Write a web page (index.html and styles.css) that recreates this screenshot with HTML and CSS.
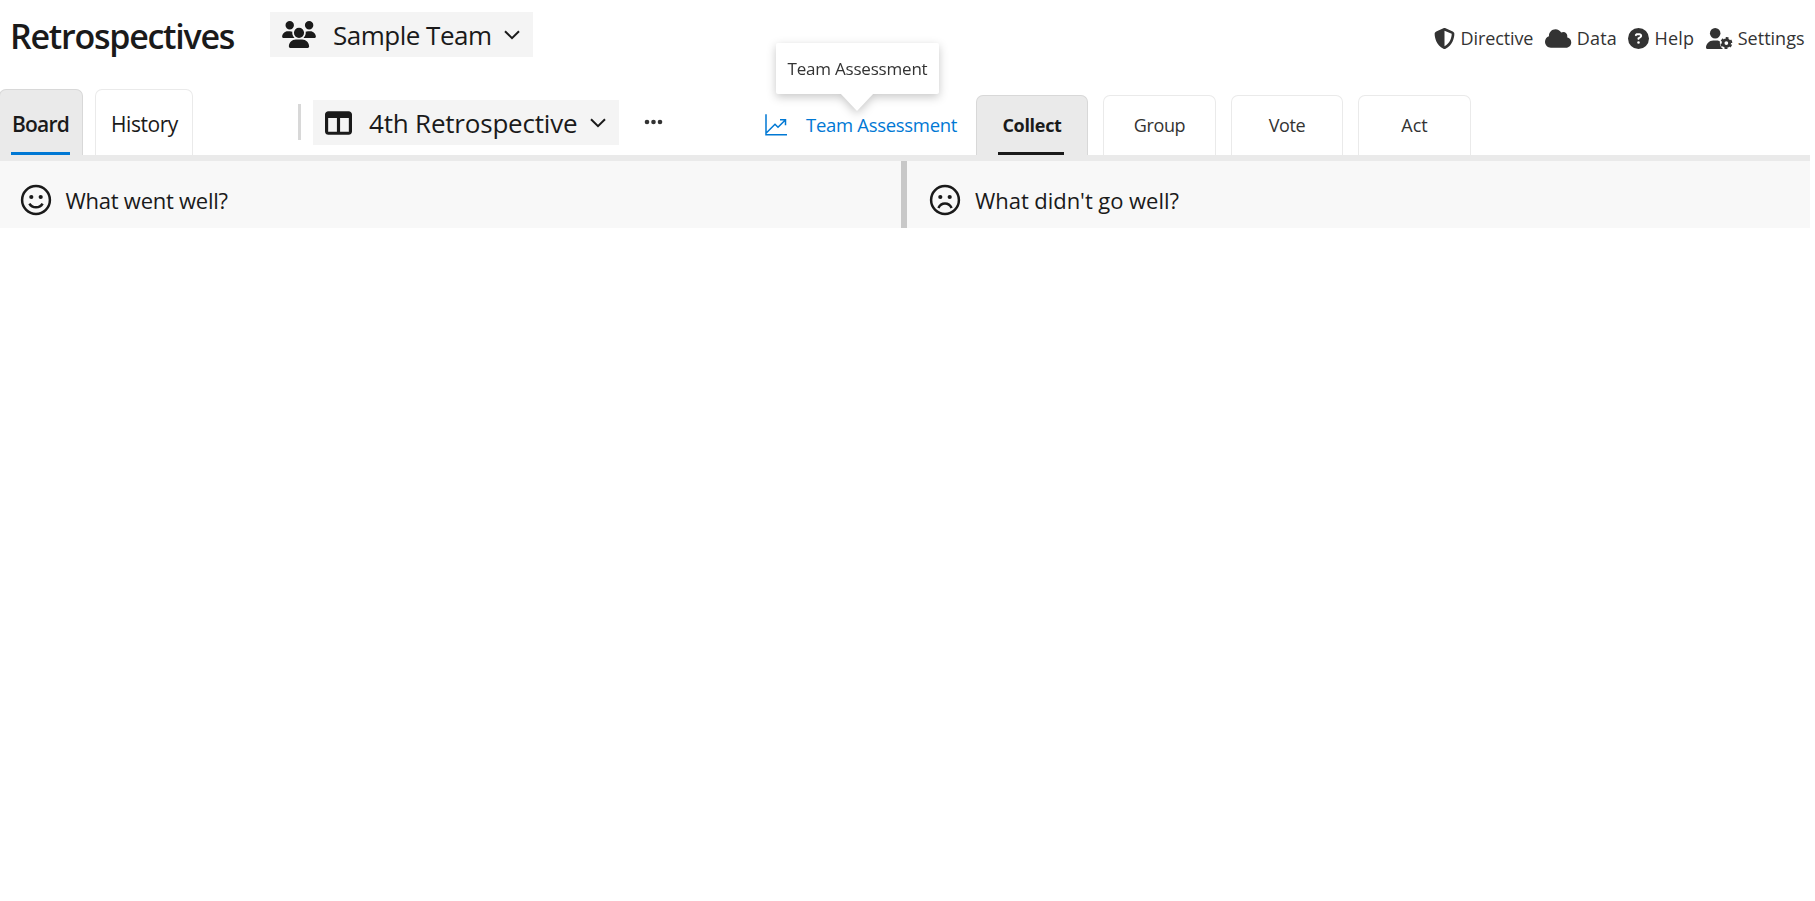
FILE: index.html
```html
<!DOCTYPE html>
<html lang="en">
<head>
<meta charset="utf-8">
<title>Retrospectives</title>
<link rel="stylesheet" href="styles.css">
</head>
<body>
<div class="app">
  <header class="header">
    <h1 class="title">Retrospectives</h1>
    <button class="picker team-picker">
      <svg class="team-icon" viewBox="0 0 640 512"><path d="M144 0a80 80 0 1 1 0 160A80 80 0 1 1 144 0zM512 0a80 80 0 1 1 0 160A80 80 0 1 1 512 0zM0 298.7C0 239.8 47.8 192 106.7 192h42.7c15.9 0 31 3.5 44.6 9.7c-1.3 7.2-1.9 14.7-1.9 22.3c0 38.2 16.8 72.5 43.3 96H21.3C9.6 320 0 310.4 0 298.7zM404.600 320c26.6-23.5 43.3-57.8 43.3-96c0-7.6-.7-15-1.9-22.3c13.6-6.3 28.7-9.7 44.6-9.7h42.7C592.2 192 640 239.8 640 298.700c0 11.800-9.600 21.300-21.300 21.300H404.600zM224 224a96 96 0 1 1 192 0 96 96 0 1 1 -192 0zM128 485.300C128 411.700 187.700 352 261.300 352H378.700C452.300 352 512 411.700 512 485.300c0 14.700-11.900 26.700-26.700 26.700H154.700c-14.700 0-26.700-11.900-26.700-26.700z"/></svg>
      <span class="team-name">Sample Team</span>
      <svg class="chevron" viewBox="0 0 16 10"><path d="M1 1.200l7 7 7-7"/></svg>
    </button>
    <div class="links">
      <a class="link"><svg class="ic" viewBox="0 0 512 512"><path d="M256 0c4.600 0 9.200 1 13.400 2.900L457.700 82.800c22 9.300 38.400 31 38.300 57.200c-.5 99.200-41.300 280.700-213.600 363.200c-16.700 8-36.100 8-52.800 0C57.300 420.700 16.500 239.200 16 140c-.1-26.200 16.300-47.900 38.300-57.200L242.700 2.900C246.800 1 251.400 0 256 0zm0 66.800V444.800C394 378 431.100 230.100 432 141.400L256 66.800z"/></svg><span class="t-directive">Directive</span></a>
      <a class="link"><svg class="ic wide" viewBox="0 0 640 512"><path d="M0 336c0 79.500 64.500 144 144 144H512c70.700 0 128-57.300 128-128c0-61.900-44-113.600-102.400-125.400c4.100-10.700 6.400-22.400 6.400-34.600c0-53-43-96-96-96c-19.700 0-38.100 6-53.300 16.200C367 64.200 315.300 32 256 32C167.600 32 96 103.600 96 192c0 2.700 .1 5.400 .2 8.100C40.200 219.800 0 273.200 0 336z"/></svg><span class="t-data">Data</span></a>
      <a class="link"><svg class="ic" viewBox="0 0 512 512"><path d="M256 512A256 256 0 1 0 256 0a256 256 0 1 0 0 512zM169.800 165.300c7.900-22.300 29.100-37.300 52.800-37.300h58.300c34.900 0 63.100 28.300 63.100 63.100c0 22.600-12.100 43.500-31.700 54.800L280 264.400c-.2 13-10.900 23.600-24 23.600c-13.300 0-24-10.700-24-24V250.500c0-8.600 4.600-16.500 12.100-20.800l44.300-25.400c4.700-2.700 7.600-7.700 7.600-13.100c0-8.400-6.800-15.100-15.100-15.100H222.600c-3.400 0-6.400 2.100-7.500 5.300l-.4 1.200c-4.400 12.500-18.200 19-30.600 14.600s-19-18.200-14.600-30.600l.3-1.200zM224 352a32 32 0 1 1 64 0 32 32 0 1 1 -64 0z"/></svg><span class="t-help">Help</span></a>
      <a class="link"><svg class="ic wide" viewBox="0 0 640 512"><circle cx="224" cy="128" r="128"/><path d="M178 304C80 304 0 384 0 482.300C0 498.700 13.300 512 29.700 512H418C360 480 330 420 338 330C315 310 290 304 270 304z"/><circle cx="496" cy="368" r="80" class="gear-ring"/><circle cx="496" cy="368" r="124" class="gear-teeth" transform="rotate(16 496 368)"/></svg><span class="t-settings">Settings</span></a>
    </div>
  </header>

  <nav class="bar">
    <div class="tab tab-board active"><span>Board</span></div>
    <div class="tab tab-history"><span>History</span></div>
    <div class="separator"></div>
    <button class="picker retro-picker">
      <svg class="board-icon" viewBox="0 0 512 448"><path d="M0 64C0 28.700 28.700 0 64 0H448c35.300 0 64 28.700 64 64V384c0 35.300-28.700 64-64 64H64c-35.300 0-64-28.700-64-64V64zm60 64V388H226V128H60zm392 0H286V388H452V128z"/></svg>
      <span class="retro-name">4th Retrospective</span>
      <svg class="chevron" viewBox="0 0 16 10"><path d="M1 1.200l7 7 7-7"/></svg>
    </button>
    <svg class="more" viewBox="0 0 19 6"><circle cx="3" cy="3" r="2.300"/><circle cx="9.500" cy="3" r="2.300"/><circle cx="16" cy="3" r="2.300"/></svg>
    <div class="assessment">
      <svg class="chart" viewBox="0 0 22 22"><path d="M1 .3V20.700H22M1.500 18.800L10 10.300l3 3L20.300 6M15 5.700h5.500v5.500"/></svg>
      <span>Team Assessment</span>
      <div class="tooltip">Team Assessment</div>
    </div>
    <div class="phases">
      <div class="tab phase phase-active"><span>Collect</span></div>
      <div class="tab phase"><span>Group</span></div>
      <div class="tab phase"><span>Vote</span></div>
      <div class="tab phase phase-act"><span>Act</span></div>
    </div>
  </nav>

  <main class="columns">
    <section class="column">
      <svg class="face" viewBox="0 0 32 32"><circle cx="16" cy="16" r="13.900"/><path d="M9.400 19.600c2.800 5 10.400 5 13.200 0"/><circle class="eye" cx="11.300" cy="13" r="2.100"/><circle class="eye" cx="20.700" cy="13" r="2.100"/></svg>
      <h2 class="heading went">What went well?</h2>
    </section>
    <section class="column second">
      <svg class="face" viewBox="0 0 32 32"><circle cx="16" cy="16" r="13.900"/><path d="M9.400 24c2.800-6 10.400-6 13.200 0"/><circle class="eye" cx="11.300" cy="13" r="2.100"/><circle class="eye" cx="20.700" cy="13" r="2.100"/></svg>
      <h2 class="heading">What didn't go well?</h2>
    </section>
  </main>
</div>
</body>
</html>
```
FILE: styles.css
```css
* { box-sizing: border-box; }
body { margin: 0; background: #fff; color: #1a1a1a; font-family: "Open Sans", "Noto Sans", sans-serif; overflow: hidden; }
svg { display: block; flex: none; fill: currentColor; overflow: visible; }
.app { width: 1810px; }

.header { display: flex; align-items: flex-start; height: 89px; }
.title { width: 260px; margin: 12px 0 0 10px; font-size: 34px; line-height: 48px; font-weight: 600; letter-spacing: -1.250px; }
.picker { display: flex; align-items: center; height: 45px; padding: 0 12px; border: 0; background: #f4f4f4; color: inherit; font-family: inherit; font-size: 26px; line-height: 45px; white-space: nowrap; }
.team-picker { width: 263px; margin-top: 12px; }
.team-icon { width: 34px; height: 27px; }
.team-name, .retro-name { padding-top: 2px; text-align: left; }
.team-name { width: 156px; margin: 0 15px 0 17px; letter-spacing: -.5px; }
.chevron { width: 16px; height: 10px; fill: none; stroke: currentColor; stroke-width: 2; }

.links { display: grid; grid-template-columns: 111px 83px 78px 104px; margin: 27px 0 0 auto; color: #333; font-size: 18px; line-height: 22px; }
.link { display: flex; align-items: center; gap: 5.500px; white-space: nowrap; }
.ic { width: 21px; height: 21px; }
.ic.wide { width: 26.250px; }
.t-directive { letter-spacing: -.1px; }
.t-data { letter-spacing: .2px; }
.t-help { letter-spacing: .2px; }
.gear-ring { fill: #fff; stroke: #333; stroke-width: 68px; }
.gear-teeth { fill: none; stroke: #333; stroke-width: 44px; stroke-dasharray: 70 59.850; }

.bar { display: flex; align-items: flex-start; height: 72px; border-bottom: 6px solid #eaeaea; }
.tab { position: relative; height: 66px; border: 1px solid #eaeaea; border-bottom: 0; border-radius: 7px 7px 0 0; font-size: 21px; line-height: 68px; text-align: center; white-space: nowrap; }
.tab-board { width: 84px; margin-left: -1px; padding-right: 1px; font-weight: 600; letter-spacing: -.8px; }
.tab-history { width: 98px; margin-left: 12px; letter-spacing: -.45px; padding-left: 1px; }
.active, .phase-active { background: #eaeaea; border-color: #d8d8d8; }
.active::after { content: ""; position: absolute; left: 11px; bottom: 0; width: 59px; height: 3px; background: #0078d4; }
.separator { width: 3px; height: 36px; margin: 15px 12px 0 105px; background: #d8d8d8; }
.retro-picker { width: 306px; margin-top: 11px; }
.board-icon { width: 27px; height: 24px; }
.retro-name { width: 209px; margin: 0 12px 0 17px; letter-spacing: -.2px; }
.more { width: 19px; height: 6px; margin: 30px 0 0 25px; color: #333; }

.assessment { position: relative; display: flex; align-items: center; width: 211px; height: 30px; margin: 21px 0 0 102px; color: #0078d4; font-size: 18.500px; line-height: 30px; letter-spacing: -.3px; white-space: nowrap; }
.chart { width: 22px; height: 22px; margin-right: 19px; fill: none; stroke: currentColor; stroke-width: 1.500; }
.tooltip { position: absolute; left: 11px; top: -67px; width: 163px; height: 51px; border-radius: 2px; background: #fff; color: #333; font-size: 17px; line-height: 51px; text-align: center; letter-spacing: -.2px; filter: drop-shadow(0 3px 5px rgba(0,0,0,.22)); }
.tooltip::after { content: ""; position: absolute; left: 64px; top: 50px; width: 34px; height: 18px; background: #fff; clip-path: polygon(0 0, 100% 0, 50% 100%); }

.phases { display: grid; grid-template-columns: 112px 113px 112px 113px; gap: 15px; margin-top: 6px; }
.phase { height: 60px; color: #333; font-size: 18px; line-height: 59px; letter-spacing: -.35px; }
.phase-active { color: #1a1a1a; font-weight: 700; letter-spacing: -.3px; }
.phase-active::after { content: ""; position: absolute; left: 21px; bottom: 0; width: 66px; height: 3px; background: #1a1a1a; }
.phase-act { letter-spacing: 0; }

.columns { display: grid; grid-template-columns: 901px 909px; height: 67px; background: #f8f8f8; }
.column { display: flex; align-items: center; padding: 11px 0 0 19.500px; }
.second { border-left: 6px solid #c8c8c8; padding-left: 22px; }
.face { width: 32px; height: 32px; fill: none; stroke: currentColor; stroke-width: 2.500; }
.face .eye { fill: currentColor; stroke: none; }
.heading { margin: 0 0 0 14px; font-size: 22px; line-height: 30px; font-weight: 400; letter-spacing: -.05px; }
.went { letter-spacing: -.25px; }
```
